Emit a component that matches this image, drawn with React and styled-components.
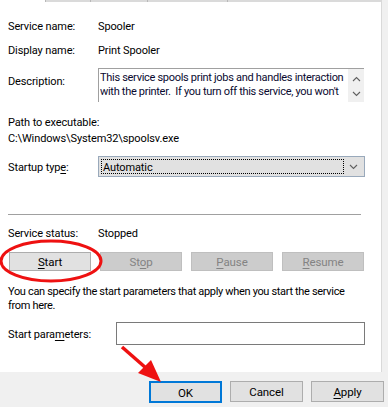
import React from 'react'
import styled, { createGlobalStyle } from 'styled-components'

const GlobalStyle = createGlobalStyle`
  html, body {
    margin: 0;
    padding: 0;
    background: #f0f0f0;
  }
  body {
    font-family: Roboto, "Liberation Sans", Arial, sans-serif;
    font-size: 11px;
    letter-spacing: -0.12px;
    color: #000;
  }
`

const Window = styled.div`
  position: relative;
  width: 388px;
  height: 407px;
  overflow: hidden;
  background: #f0f0f0;
`

const Panel = styled.div`
  width: 382px;
  height: 372px;
  background: #fff;
  border-right: 1px solid #d9d9d9;
  padding-left: 8px;
  box-sizing: border-box;
`

const TabStrip = styled.div`
  display: flex;
  height: 2px;
  margin-left: 37px;
  background: #dadada;
`

const Tab = styled.div`
  width: ${p => p.w}px;
  height: 2px;
  border-left: 1px solid #b8b8b8;
  box-sizing: border-box;
`

const InfoRow = styled.div`
  display: grid;
  grid-template-columns: ${p => p.label || 90}px auto;
  align-items: ${p => (p.top ? 'start' : 'center')};
  margin-top: ${p => p.mt}px;
  line-height: 14px;
`

const Label = styled.div`
  padding-top: ${p => p.pt ?? 2}px;
  white-space: nowrap;
`

const Value = styled.div`
  padding-top: 2px;
`

const Text = styled.div`
  margin-top: ${p => p.mt || 0}px;
  padding-top: 2px;
  line-height: 14px;
  white-space: nowrap;
  letter-spacing: ${p => (p.tight ? '-0.33px' : 'inherit')};
`

const DescBox = styled.div`
  position: relative;
  width: 266px;
  height: 34px;
  box-sizing: border-box;
  border-top: 1px solid #a0a0a0;
  border-left: 1px solid #a0a0a0;
  padding: 2px 17px 0 1px;
  line-height: 14px;
  letter-spacing: -0.3px;
  color: #0a0a30;
  white-space: nowrap;
  overflow: hidden;
  display: flex;
`

const DescText = styled.div`
  flex: 1;
  overflow: hidden;
`

const ScrollBar = styled.div`
  position: absolute;
  right: 0;
  top: 0;
  bottom: 0;
  width: 16px;
  background: #f0f0f0;
  display: flex;
  flex-direction: column;
  justify-content: space-around;
  align-items: center;
  padding: 3px 0 1px;
  box-sizing: border-box;
`

const Combo = styled.div`
  width: 267px;
  height: 21px;
  box-sizing: border-box;
  background: #e1e1e1;
  border: 1px solid #99a9bb;
  display: flex;
  align-items: center;
  padding: 2px;
`

const ComboFocus = styled.div`
  flex: 1;
  height: 15px;
  box-sizing: border-box;
  border: 1px dotted #000;
  padding: 1px 0 0 1px;
  line-height: 13px;
`

const ComboArrow = styled.div`
  width: 18px;
  display: flex;
  justify-content: center;
  align-items: center;
`

const Separator = styled.div`
  width: 353px;
  height: 1px;
  background: #a0a0a0;
  margin-top: ${p => p.mt}px;
`

const ButtonRow = styled.div`
  display: flex;
  gap: 9px;
  margin-top: ${p => p.mt}px;
  padding-left: 1px;
`

const Button = styled.div`
  width: ${p => p.w || 82}px;
  height: ${p => p.h || 19}px;
  box-sizing: border-box;
  display: flex;
  align-items: center;
  justify-content: center;
  padding-top: 1px;
  background: ${p => (p.disabled ? '#cccccc' : '#e1e1e1')};
  border: ${p => (p.primary ? '2px solid #0078d7' : p.disabled ? '1px solid #bfbfbf' : '1px solid #adadad')};
  color: ${p => (p.disabled ? '#838383' : '#000')};
  font-size: 11.5px;
`

const Key = styled.span`
  text-decoration: underline;
  text-underline-offset: 2px;
`

const ParamBox = styled.div`
  width: 249px;
  height: 23px;
  box-sizing: border-box;
  border: 1px solid #7a7a7a;
  background: #fff;
`

const Footer = styled.div`
  display: flex;
  justify-content: flex-end;
  gap: 8px;
  padding: 9px 4px 0 0;
`

const Overlay = styled.svg`
  position: absolute;
  left: 0;
  top: 0;
  pointer-events: none;
`

const Chevron = ({ up }) => (
  <svg width="9" height="6" viewBox="0 0 9 6">
    <path d={up ? 'M1 5 L4.5 1.5 L8 5' : 'M1 1 L4.5 4.5 L8 1'} fill="none" stroke="#606060" strokeWidth="1.1" />
  </svg>
)

export default function App() {
  return (
    <>
      <GlobalStyle />
      <Window>
        <Panel>
          <TabStrip>
            <Tab w={45} />
            <Tab w={58} />
            <Tab w={80} />
            <Tab w={155} />
          </TabStrip>

          <InfoRow mt={16}>
            <Label>Service name:</Label>
            <Value>Spooler</Value>
          </InfoRow>
          <InfoRow mt={8}>
            <Label>Display name:</Label>
            <Value>Print Spooler</Value>
          </InfoRow>
          <InfoRow mt={10} top>
            <Label pt={7}>Description:</Label>
            <DescBox>
              <DescText>
                This service spools print jobs and handles interaction
                <br />
                with the printer.&nbsp; If you turn off this service, you won't
              </DescText>
              <ScrollBar>
                <Chevron up />
                <Chevron />
              </ScrollBar>
            </DescBox>
          </InfoRow>

          <Text mt={12}>Path to executable:</Text>
          <Text>C:\Windows\System32\spoolsv.exe</Text>

          <InfoRow mt={10}>
            <Label>
              Startup typ<Key>e</Key>:
            </Label>
            <Combo>
              <ComboFocus>Automatic</ComboFocus>
              <ComboArrow>
                <Chevron />
              </ComboArrow>
            </Combo>
          </InfoRow>

          <Separator mt={37} />

          <InfoRow mt={10}>
            <Label>Service status:</Label>
            <Value>Stopped</Value>
          </InfoRow>

          <ButtonRow mt={11}>
            <Button>
              <Key>S</Key>tart
            </Button>
            <Button disabled>
              St<Key>o</Key>p
            </Button>
            <Button disabled>
              <Key>P</Key>ause
            </Button>
            <Button disabled>
              <Key>R</Key>esume
            </Button>
          </ButtonRow>

          <Text mt={12} tight>
            You can specify the start parameters that apply when you start the service
            <br />
            from here.
          </Text>

          <InfoRow mt={9} label={108}>
            <Label>
              Start para<Key>m</Key>eters:
            </Label>
            <ParamBox />
          </InfoRow>
        </Panel>

        <Footer>
          <Button primary w={73} h={22}>
            OK
          </Button>
          <Button w={73} h={21}>
            Cancel
          </Button>
          <Button w={73} h={21}>
            <Key>A</Key>pply
          </Button>
        </Footer>

        <Overlay width="388" height="407" viewBox="0 0 388 407">
          <ellipse cx="51" cy="261" rx="50" ry="20" fill="none" stroke="#ee1111" strokeWidth="3" />
          <line x1="122" y1="347" x2="146" y2="368" stroke="#ee1111" strokeWidth="3.5" />
          <polygon points="161,382 138,373 151,360" fill="#ee1111" />
        </Overlay>
      </Window>
    </>
  )
}
